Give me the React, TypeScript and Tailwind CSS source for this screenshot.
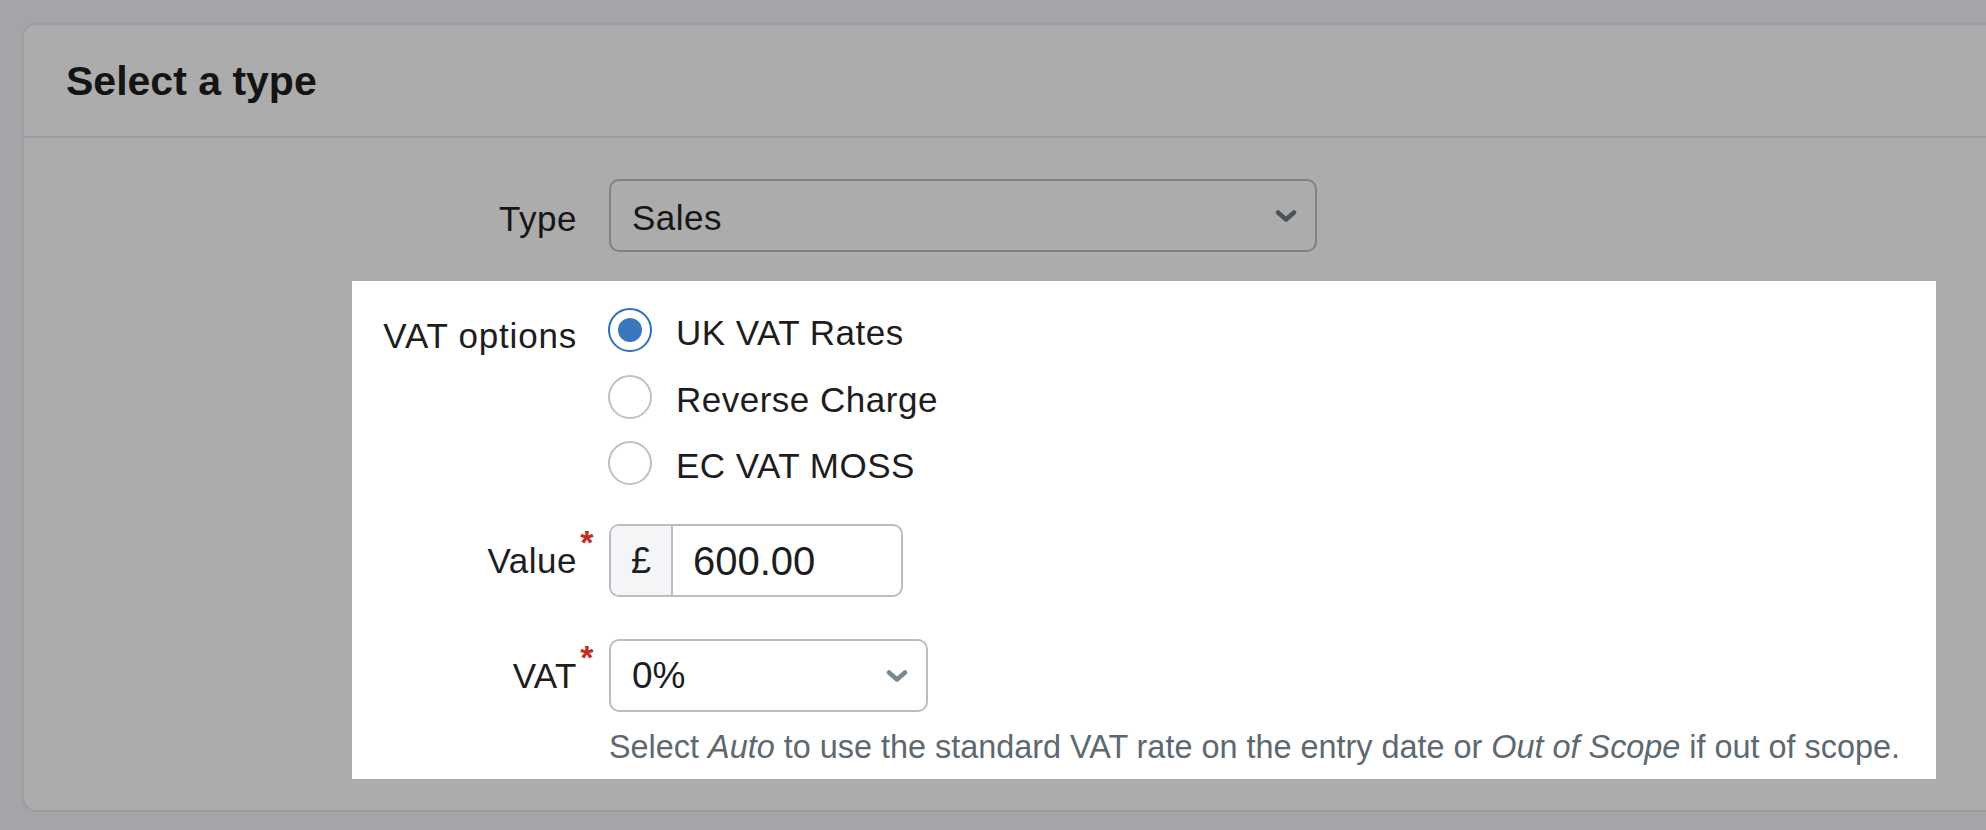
const font = "font-['Liberation_Sans',Arial,sans-serif]"

function Chevron({ color }: { color: string }) {
  return (
    <svg width="22" height="14" viewBox="0 0 22 14" fill="none" className="flex-shrink-0">
      <path d="M3 3.5L11 10.5L19 3.5" stroke={color} strokeWidth="4.5" strokeLinecap="round" strokeLinejoin="round" />
    </svg>
  )
}

function Radio({ checked, label }: { checked?: boolean; label: string }) {
  return (
    <label className="flex h-[44px] items-center gap-[24px]">
      <span
        className={`flex h-[44px] w-[44px] flex-shrink-0 items-center justify-center rounded-full border-2 bg-white ${
          checked ? 'border-[#2f6dbf]' : 'border-[#bcc1c6]'
        }`}
      >
        {checked && <span className="h-[24px] w-[24px] rounded-full bg-[#3a78be]" />}
      </span>
      <span className="pt-[6px] text-[35px] leading-[44px] tracking-[0.5px] text-[#1d1d1f]">{label}</span>
    </label>
  )
}

function Label({ text, required }: { text: string; required?: boolean }) {
  return (
    <div className="flex w-[225px] flex-shrink-0 justify-end">
      <span className="relative text-[35px] leading-[40px] tracking-[0.5px] text-[#1d1d1f]">
        {text}
        {required && (
          <span className="absolute -right-[17px] -top-[16px] text-[34px] font-bold leading-[34px] text-[#c62a21]">*</span>
        )}
      </span>
    </div>
  )
}

export default function App() {
  return (
    <div className={`h-[830px] w-full overflow-hidden bg-[#a3a5a9] pl-[22px] pt-[23px] ${font}`}>
      <div className="rounded-l-[14px] border-2 border-r-0 border-[#9c9da1] bg-[#acacac] pb-[31px]">
        {/* Header */}
        <div className="flex h-[113px] items-center border-b-2 border-[#9d9ea2] pl-[42px]">
          <h1 className="text-[41px] font-bold leading-[48px] text-[#141414]">Select a type</h1>
        </div>

        {/* Body */}
        <div className="pl-[328px] pt-[41px]">
          {/* Type row (dimmed) */}
          <div className="flex items-center gap-[32px]">
            <div className="flex w-[225px] flex-shrink-0 justify-end">
              <span className="pt-[6px] text-[35px] leading-[40px] tracking-[0.5px] text-[#161616]">Type</span>
            </div>
            <div className="flex h-[73px] w-[708px] items-center justify-between rounded-[10px] border-2 border-[#7e8185] pl-[21px] pr-[18px]">
              <span className="pt-[4px] text-[35px] leading-[40px] tracking-[0.5px] text-[#161616]">Sales</span>
              <Chevron color="#4b5359" />
            </div>
          </div>

          {/* Highlighted section */}
          <div className="mt-[29px] w-[1584px] bg-white pb-[14px] pt-[27px]">
            <div className="flex gap-[32px]">
              <div className="flex h-[44px] w-[225px] flex-shrink-0 justify-end">
                <span className="pt-[6px] text-[35px] leading-[44px] tracking-[0.8px] text-[#1d1d1f]">VAT options</span>
              </div>
              <div className="-ml-[1px] flex flex-col gap-[22.5px]">
                <Radio checked label="UK VAT Rates" />
                <Radio label="Reverse Charge" />
                <Radio label="EC VAT MOSS" />
              </div>
            </div>

            <div className="mt-[39px] flex items-center gap-[32px]">
              <Label text="Value" required />
              <div className="flex h-[73px] w-[294px] overflow-hidden rounded-[10px] border-2 border-[#babdc2]">
                <div className="flex w-[62px] items-center justify-center border-r-2 border-[#babdc2] bg-[#f4f5f7] text-[36px] text-[#1d1d1f]">
                  £
                </div>
                <div className="flex flex-1 items-center pl-[20px] text-[40px] text-[#1d1d1f]">600.00</div>
              </div>
            </div>

            <div className="mt-[42px] flex items-center gap-[32px]">
              <Label text="VAT" required />
              <div className="flex h-[73px] w-[319px] items-center justify-between rounded-[10px] border-2 border-[#babdc2] pl-[21px] pr-[18px]">
                <span className="text-[37px] leading-[40px] text-[#1d1d1f]">0%</span>
                <Chevron color="#7b8790" />
              </div>
            </div>

            <p className="mt-[17px] pl-[257px] text-[32.4px] leading-[36px] text-[#5d6871]">
              Select <em>Auto</em> to use the standard VAT rate on the entry date or <em>Out of Scope</em> if out of scope.
            </p>
          </div>
        </div>
      </div>
    </div>
  )
}
